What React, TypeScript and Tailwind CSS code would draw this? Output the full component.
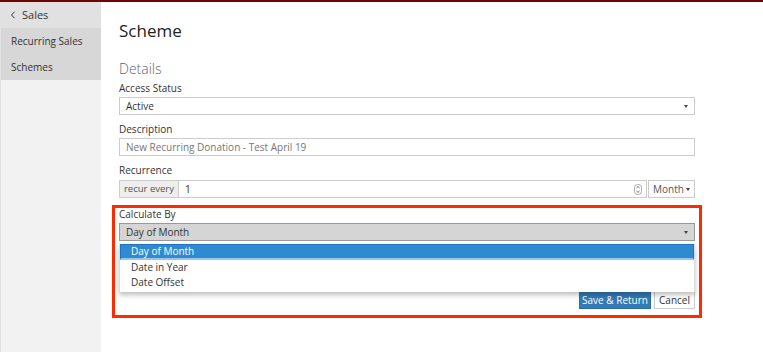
import * as React from "react";

function Caret({ className = "" }: { className?: string }) {
  return (
    <span
      className={
        "inline-block w-0 h-0 border-l-[2.5px] border-r-[2.5px] border-t-[3px] border-l-transparent border-r-transparent border-t-[#444] " +
        className
      }
    />
  );
}

function Spinner() {
  return (
    <svg width="8" height="11" viewBox="0 0 8 11" className="mr-[4px]">
      <rect x="0.5" y="0.5" width="7" height="10" rx="3" fill="#fff" stroke="#aaa" />
      <path d="M2.5 4 L4 2.6 L5.5 4" fill="none" stroke="#444" strokeWidth="0.8" />
      <path d="M2.5 7 L4 8.4 L5.5 7" fill="none" stroke="#444" strokeWidth="0.8" />
    </svg>
  );
}

function Label({ children }: { children: React.ReactNode }) {
  return <div className="text-[10px] leading-[13px] text-[#333]">{children}</div>;
}

export default function App() {
  return (
    <div
      className="w-[763px] h-[352px] flex flex-col bg-white overflow-hidden"
      style={{ fontFamily: '"Open Sans", "Noto Sans", sans-serif' }}
    >
      <div className="h-[2px] bg-[#6d0505] shrink-0" />
      <div className="flex flex-1 min-h-0">
        {/* sidebar */}
        <div className="w-[101px] shrink-0 bg-[#f2f2f2] border-l border-[#e2e2e2] flex flex-col">
          <div className="h-[26px] bg-[#e1e1e1] flex items-center pl-[9px] text-[11px] text-[#333]">
            <svg width="6" height="8" viewBox="0 0 6 8" className="mr-[6px]">
              <path d="M4.5 0.8 L1.5 4 L4.5 7.2" fill="none" stroke="#333" strokeWidth="1" />
            </svg>
            Sales
          </div>
          <div className="h-[26px] bg-[#d7d7d7] flex items-center pl-[10px] text-[10px] text-[#333]">
            Recurring Sales
          </div>
          <div className="h-[26px] bg-[#d7d7d7] flex items-center pl-[10px] text-[10px] text-[#333]">
            Schemes
          </div>
        </div>

        {/* main */}
        <div className="flex-1 pl-[18px] pr-[68px]">
          <div className="mt-[18px] h-[22px] text-[17px] leading-[22px] text-[#222]">Scheme</div>
          <div className="mt-[18px] h-[18px] text-[14px] leading-[18px] text-[#666] font-light">Details</div>

          <div className="mt-[4px]">
            <Label>Access Status</Label>
          </div>
          <div className="mt-[2px] h-[18px] border border-[#ccc] flex items-center justify-between pl-[6px] pr-[6px] text-[10px] text-[#333]">
            <span>Active</span>
            <Caret />
          </div>

          <div className="mt-[8px]">
            <Label>Description</Label>
          </div>
          <div className="mt-[2px] h-[18px] border border-[#ccc] flex items-center pl-[6px] text-[10px] text-[#777]">
            New Recurring Donation - Test April 19
          </div>

          <div className="mt-[8px]">
            <Label>Recurrence</Label>
          </div>
          <div className="mt-[3px] h-[18px] flex text-[10px]">
            <div className="w-[60px] bg-[#eee] border border-[#ccc] flex items-center justify-center text-[#555] text-[9.5px]">
              recur every
            </div>
            <div className="flex-1 border border-l-0 border-[#ccc] flex items-center justify-between pl-[6px] text-[#333]">
              <span>1</span>
              <Spinner />
            </div>
            <div className="ml-[1px] w-[47px] border border-[#ccc] flex items-center justify-center gap-[2px] text-[#555] text-[10px]">
              Month
              <Caret />
            </div>
          </div>

          {/* highlighted group */}
          <div className="relative mt-[7px] -ml-[7px] -mr-[7px] h-[113px] border-[3px] border-[#ff2a00] px-[4px]">
            <Label>Calculate By</Label>
            <div className="mt-[2px] h-[18px] bg-[#d5d5d5] border border-[#9a9a9a] flex items-center justify-between pl-[6px] pr-[6px] text-[10px] text-[#333]">
              <span>Day of Month</span>
              <Caret />
            </div>
            <div className="mt-[50px] flex justify-end gap-[3px] text-[10px]">
              <div className="h-[18px] w-[72px] bg-[#337ab7] border border-[#2e6da4] text-white flex items-center justify-center">
                Save &amp; Return
              </div>
              <div className="h-[18px] w-[41px] bg-white border border-[#ccc] text-[#333] flex items-center justify-center">
                Cancel
              </div>
            </div>

            {/* open dropdown */}
            <div className="absolute left-[4px] right-[4px] top-[36px] bg-white border-x border-[#ddd] shadow-[0_3px_5px_rgba(0,0,0,0.25)] text-[10px] text-[#333]">
              <div className="h-[16px] bg-[#2f8bd0] border border-[#1f72c4] border-b-[2px] border-b-[#9cc4f2] flex items-center pl-[10px] text-white">
                Day of Month
              </div>
              <div className="h-[15px] flex items-center pl-[11px]">Date in Year</div>
              <div className="h-[15px] flex items-center pl-[11px]">Date Offset</div>
              <div className="h-[2px]" />
            </div>
          </div>
        </div>
      </div>
    </div>
  );
}
